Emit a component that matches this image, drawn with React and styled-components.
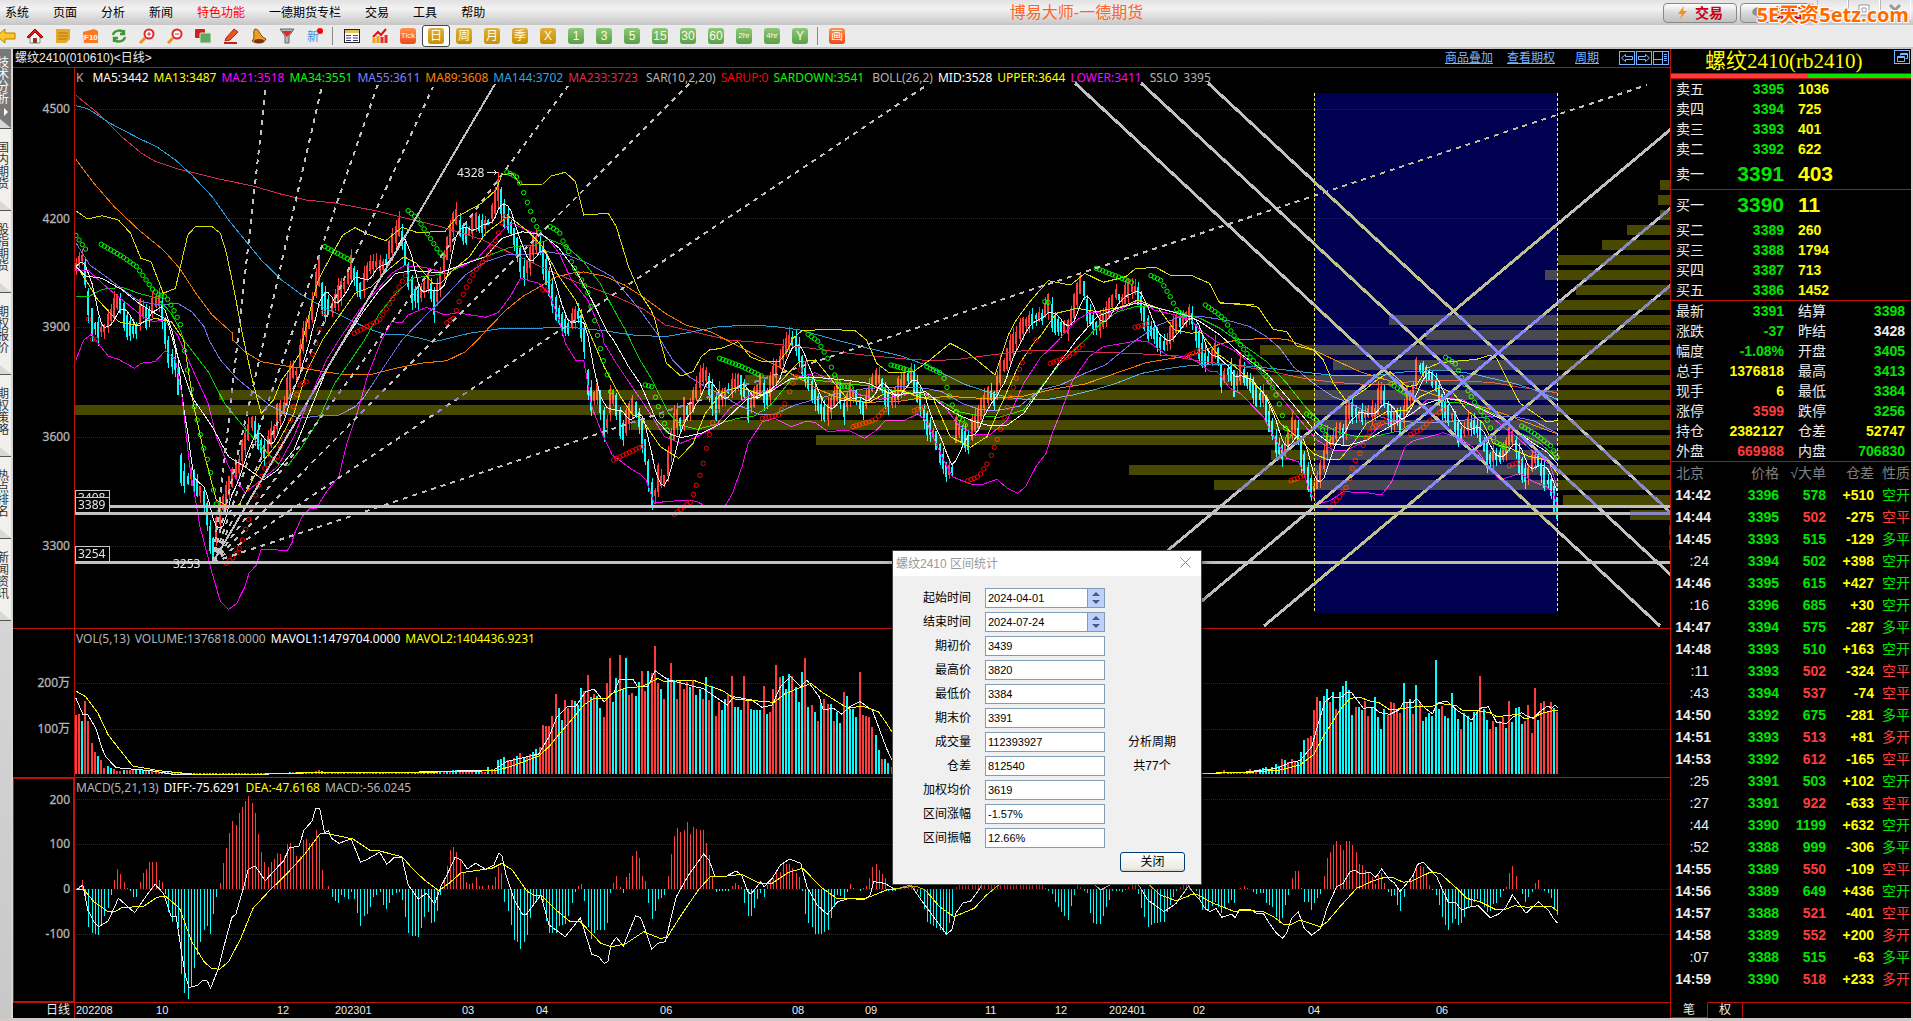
import React from 'react';
import styled, { createGlobalStyle, css } from 'styled-components';

const C = {
  line: '#c01008',
  grid: '#8c0000',
  up: '#ff3c3c',
  down: '#00ffff',
  green: '#00e600',
  yellow: '#ffff00',
  red: '#ff3c3c',
  white: '#ececec',
  grey: '#b4b4b4',
  link: '#78b4ff',
};
const UI = '"Liberation Sans", "Noto Sans CJK SC", sans-serif';
const LEGEND = '"Noto Sans", "Noto Sans CJK SC", sans-serif';

const Global = createGlobalStyle`
  * { box-sizing: border-box; }
  body { margin: 0; background: #000; font-family: ${UI}; font-size: 12px; }
  button, input { font: inherit; }
  button { padding: 0; border: 0; background: none; color: inherit; white-space: nowrap; }
  table { border-collapse: collapse; }
`;

/* ---------- chart data ---------- */

// Each sheet has its own origin and scale; every series is a run of points over several sheets.
const sheet = (ox, oy, sx, sy) => (text) =>
  text.split(' ').map((p) => {
    const [x, y] = p.split(',').map(Number);
    return [ox + x / sx, oy + y / sy];
  });
const P1 = sheet(0, 0, 2.45, 3);
const P2 = sheet(400, 0, 2.45, 3);
const P3 = sheet(1040, 0, 2.45, 3);
const P4 = sheet(0, 340, 2.45, 3);
const P5 = sheet(640, 340, 2.45, 3);
const P6 = sheet(1200, 300, 3, 3);
const V1 = sheet(0, 620, 2.45, 3);
const V2 = sheet(560, 620, 2.45, 3);
const V3 = sheet(1190, 620, 3, 3);
const run = (...parts) => parts.flat();

const ma233 = run(
  P1('186,286 240,340 300,412 345,458 380,484 430,505 470,517 540,538 620,558 690,583 750,600 820,609 920,632 1020,662 1080,680 1180,718'),
  P2('230,736 300,775 380,820 430,845 530,890 600,930 650,975 720,995'),
  P5('215,0 300,8 400,22 500,38 570,48 660,58 720,62 780,58 860,45 940,32 1030,32 1130,37 1200,40 1290,46 1380,65 1450,75 1540,92'),
  P6('240,220 310,235 400,247 480,252 560,255 640,244 720,241 800,243 880,248 960,262 1072,278'),
);
const ma144 = run(
  P1('186,317 215,326 270,370 340,415 385,441 430,480 470,525 520,590 560,660 600,720 640,780 690,840 740,885 790,920 850,955 900,985 940,1002 985,1003 1040,1018'),
  P4('1060,6'),
  P2('110,1018 170,1000 240,987 320,985 420,982 500,992 570,1005 650,1010 710,997 780,980 860,975 920,980 980,990'),
  P5('480,0 560,25 640,48 700,75 740,100 800,135 850,155 900,172 950,179 1000,178 1060,165 1110,150 1160,133 1230,100 1280,88 1340,78 1400,72 1460,75'),
  P6('240,208 300,215 400,226 480,228 560,222 620,215 700,212 760,213 820,222 880,236 940,250 1000,268 1072,298'),
);
const ma89 = run(
  P1('186,478 230,550 280,620 340,690 400,750 440,805 480,880 520,945 570,1000'),
  P4('570,0 600,35 640,65 700,78 780,92 830,102 910,103 970,85 1030,70 1095,62 1140,35 1170,0'),
  P2('220,980 260,930 300,890 340,862 380,832 430,817 450,816 500,828 550,855 600,895 650,940 700,975 760,995'),
  P5('220,5 290,50 340,80 390,115 440,150 490,175 560,187 640,183 700,172 770,170 850,176 940,168 1010,148 1090,132 1160,102 1240,68 1290,58 1340,48'),
  P6('0,157 60,132 110,120 200,115 260,118 330,145 400,178 480,215 560,240 640,262 720,290 780,303 860,325 920,345 1000,375 1072,402'),
);
const ma55 = run(
  P1('186,728 220,795 260,830 300,868 340,903 390,915 435,910 470,935 500,980'),
  P4('512,0 540,60 580,115 620,155 660,195 700,220 735,235 780,228 830,225 870,200 890,175 930,100 960,45 985,0'),
  P1('1040,950 1090,890 1140,825 1190,785 1240,765 1300,762 1340,755 1390,765 1440,790 1500,830 1568,930'),
  P2('635,1010'),
  P5('50,0 80,60 120,110 160,140 200,165 240,195 290,222 330,222 380,195 430,178 500,155 560,145 640,140 700,145 740,155 790,190 830,208 870,213 930,198 980,150 1030,135 1090,100 1140,75 1180,35 1215,0'),
  P3('290,975 340,952 390,948 450,960'),
  P6('80,60 150,80 200,110 240,145 280,200 340,250 400,290 450,310 520,345 600,365 700,368 780,362 860,350 940,350 1000,362 1072,400'),
);
const ma34 = run(
  P1('186,890 220,888 250,868 300,862 340,880 385,895 420,940 445,1000'),
  P4('450,0 510,95 550,190 600,265 640,320 680,370 705,378 740,320 780,240 820,130 860,60 893,0'),
  P1('930,940 970,880 1010,835 1050,828 1100,818 1150,785 1200,765 1250,742 1310,735 1345,718 1390,740 1430,785 1470,850 1500,920 1530,985'),
  P5('0,60 30,120 70,220 100,255 140,268 180,255 240,235 280,228 320,195 370,120 400,115 460,125 500,130 560,138 640,155 700,165 740,185 780,215 820,225 880,232 940,210 980,145 1030,70 1090,0'),
  P3('150,970 190,935 240,918 290,925 350,942'),
  P6('0,55 60,85 130,135 200,185 260,250 320,325 370,375 420,398 470,410 530,408 600,392 660,355 720,305 770,308 830,318 900,350 960,400 1020,430 1072,475'),
);
const ma21 = run(
  P1('186,810 215,810 260,860 310,910 350,950 375,965 400,960 435,1005'),
  P4('440,0 480,110 510,190 530,290 560,380 600,458 640,420 680,380 720,290 760,170 800,60 830,0'),
  P1('880,930 920,875 960,820 990,797 1040,802 1080,815 1130,800 1170,775 1210,720 1240,680 1255,670 1290,690 1340,712 1370,760 1400,840 1440,900 1475,1000'),
  P4('1480,10 1510,70 1568,175'),
  P5('30,230 60,290 100,310 140,290 180,265 220,205 270,165 320,150 370,118 430,98 490,135 540,165 590,178 640,165 690,155 740,190 780,255 820,285 860,282 900,240 940,130 980,55 1025,0'),
  P3('90,960 120,938 170,940 210,920 240,903 280,930 330,945 370,960'),
  P6('0,90 50,125 100,150 150,190 200,240 250,300 300,360 350,420 400,450 440,450 500,420 540,375 600,360 640,340 680,300 740,295 790,300 850,330 910,380 960,420 1000,455 1050,495 1072,560'),
);
const ma13 = run(
  P1('186,795 215,850 240,900 290,965 330,975 380,955 420,965 445,1010'),
  P4('450,0 475,200 500,340 530,480 560,500 585,495 610,440 640,370 680,310 720,220 750,100 790,0'),
  P1('830,950 870,880 910,860 950,810 990,770 1020,790 1060,850 1080,850 1110,810 1150,770 1190,700 1245,648 1290,690 1330,740 1370,830 1410,900 1445,1000'),
  P4('1452,0 1480,80 1520,170 1550,225'),
  P5('0,230 50,320 95,355 130,310 160,220 200,160 240,140 300,165 340,130 390,65 430,60 470,120 510,180 560,188 600,160 640,150 680,170 720,180 760,290 810,322 850,290 890,180 930,70 970,0'),
  P3('0,1010 40,940 90,925 140,935 200,920 240,900 290,925 330,990 370,1000'),
  P6('0,95 50,160 100,195 150,240 200,290 240,370 290,410 340,460 380,478 420,478 460,430 500,370 560,335 620,330 660,290 720,262 760,280 800,330 850,370 880,430 930,445 990,470 1040,480 1072,520'),
);
const bollMid = run(
  P1('186,800 210,828 250,835 300,870 340,910 380,940 410,960'),
  P4('430,30 470,170 520,260 560,350 600,380 645,420 680,390 720,330 760,210 800,90 845,0'),
  P1('890,935 930,870 970,820 1010,812 1080,818 1130,795 1190,770 1230,715 1280,695 1330,705 1370,745 1410,810 1450,900 1490,1000'),
  P4('1503,0 1540,80'),
  P5('0,130 40,240 70,280 100,293 150,280 200,250 260,180 320,155 370,115 430,112 500,120 560,130 620,165 700,155 740,195 780,225 820,245 860,258 900,255 940,220 980,150 1020,80 1070,0'),
  P3('140,950 190,925 240,908 300,928 370,950'),
  P6('0,65 60,105 120,160 200,220 260,290 310,350 350,400 390,430 440,438 500,420 560,385 620,350 680,310 730,295 780,300 850,330 910,360 960,400 1000,430 1040,455 1072,490'),
);
const bollUpper = run(
  P1('186,633 215,657 250,647 290,660 320,700 345,775 370,785 400,880 430,865 440,810 460,705 480,678 520,680 540,700 555,760 575,880 595,1010'),
  P4('597,0 620,130 640,220 670,180 690,120 715,80 735,40 742,0'),
  P1('760,930 780,840 810,770 840,705 870,683 900,702 945,722 985,682 1020,697 1090,695 1120,650 1180,610 1215,570 1230,525 1255,520 1275,553 1330,552 1350,528 1385,517 1410,545 1430,645 1490,640 1510,680 1540,800 1568,880'),
  P2('615,930 625,960'),
  P5('49,0 65,70 100,108 130,95 150,50 170,30 200,25 240,5 270,50 300,65 340,65 360,35'),
  P2('963,1015 985,992 1050,988 1115,992'),
  P5('555,0 580,70 610,98 670,95 710,60 760,10 800,35 840,75 870,105 890,30'),
  P2('1490,1005 1510,960 1540,910 1568,870'),
  P3('20,842 75,855 110,820 155,847 210,830 235,805 285,803 320,826 370,826 415,850 440,908 525,915'),
  P6('60,10 120,12 175,22 200,60 220,88 260,95 290,138 340,150 370,180 400,250 440,305 500,265 530,240 570,215 620,260 650,255 680,205 720,188 830,178 870,165 890,175 920,235 960,310 1010,345 1040,365 1072,362'),
);
const bollLower = run(
  P4('186,60 205,0'),
  P1('225,1002'),
  P4('240,10 265,48 290,58 330,85 345,70 380,65 405,32 430,60 445,160 465,380 490,560 520,700 540,785 560,808 580,790 600,740 610,700 628,675 640,628 670,628 690,632 705,630 715,610 720,585 740,530 760,505 775,505 800,455 830,410 850,310 875,220 900,110 935,0'),
  P1('960,965 985,968 1000,945 1045,922 1070,935 1090,945 1120,938 1190,952 1220,938 1250,890 1275,835 1320,850 1345,880 1370,960'),
  P4('1385,10 1410,60 1430,60 1450,200 1475,280 1500,345 1550,390'),
  P5('0,402 15,420 35,490 60,485 120,480 140,485 155,495 210,495 225,465 250,380 265,310 300,245 330,235 370,260 410,243 430,248 460,275 510,270 550,295 580,270 600,243 650,240 680,222 700,240 740,350 765,410 810,432 840,433 875,418 900,445 925,460 945,440 970,380 995,340 1010,280 1030,220 1060,120 1100,50 1135,20 1220,2 1245,5 1290,45 1340,50'),
  P6('0,190 30,215 50,213 90,265 120,280 150,310 190,350 215,400 240,440 260,475 295,485 310,515 330,575 350,612 390,602 430,575 500,578 545,585 575,545 600,480 615,440 640,422 680,412 730,398 780,415 830,450 870,505 900,540 930,530 960,520 1000,545 1040,560 1060,580 1072,620'),
);
const priceTrack = run(
  P1('186,800 195,780 205,770 212,880 222,960 240,990 255,985 270,950 288,900 300,930 310,975 322,990 335,990 345,920 360,960 375,910 390,900 400,950'),
  P4('410,30 420,60 432,75 440,170 443,385 455,430 470,405 480,440 495,460 505,500 515,600 520,640 530,560 540,510 555,460 565,420 575,400 585,380 595,320 605,290 615,240 625,270 635,310 650,340 660,300 672,275 680,220 695,210 705,140 715,90 725,100 735,50 742,0'),
  P1('750,985 760,960 770,890 780,800 790,900 800,920 815,920 825,890 840,860 850,845 860,800 870,830 885,880 895,830 905,800 920,790 935,800 945,790 955,740 965,720 978,680 990,740 1000,830 1012,880 1025,890 1040,860 1050,840 1063,910 1075,860 1085,800 1100,720 1115,640 1125,680 1140,710 1155,680 1165,660 1180,680 1195,670 1210,620 1222,560 1232,640 1242,660 1255,690 1270,760 1282,820 1295,790 1305,740 1320,720 1330,780 1345,850 1360,920 1375,960 1390,990 1405,950 1415,940 1430,1010'),
  P4('1435,60 1445,180 1455,170 1465,150 1475,230 1485,270 1495,180 1505,170 1515,230 1525,280 1535,240 1550,190 1560,210'),
  P5('0,250 15,350 25,460 35,470 45,410 55,430 65,400 78,290 88,230 100,250 110,200 120,220 135,160 150,110 160,100 170,140 185,210 195,170 210,160 225,140 240,120 255,150 265,210 280,170 295,130 310,180 325,110 345,60 355,20 370,0 385,15 400,90 412,130 425,160 440,200 455,230 470,190 485,150 500,210 515,150 530,170 545,210 560,160 575,110 590,120 600,170 615,190 630,150 650,120 665,100 680,160 690,200 705,260 720,280 735,340 750,390 765,390 775,260 790,290 805,310 815,260 830,230 840,190 855,160 870,180 880,100 895,70 910,20'),
  P2('1515,1000 1530,970 1545,960 1560,950'),
  P3('5,950 20,910 35,970 50,980 70,980 85,910 95,860 105,840 115,930 125,960 140,980 155,960 170,920 185,880 200,900 215,870 230,860 245,900 260,980 280,1000'),
  P5('1280,20 1290,10'),
  P3('320,1000 335,970 350,960 365,940 375,960'),
  P6('0,150 15,180 30,180 50,140 65,240 75,220 90,210 105,260 120,210 140,240 155,260 170,290 190,290 205,360 215,380 225,430 240,450 250,460 260,430 275,380 290,380 300,450 315,500 330,560 345,570 355,530 370,490 380,430 400,420 415,380 430,400 445,320 470,340 490,350 510,330 525,340 540,280 555,300 570,360 590,350 605,380 620,300 640,280 650,200 670,210 690,230 710,260 725,310 740,340 760,350 775,400 790,400 805,370 820,380 835,390 850,430 865,480 880,470 900,470 915,450 930,400 945,420 955,480 970,520 980,530 995,490 1010,470 1020,500 1035,540 1050,550 1060,590 1070,625'),
);
const sarDown = [
  P1('186,706 195,722 210,748'),
  P1('248,733 300,770 335,800 375,870 390,885'),
  P1('395,887 407,890 430,940 447,988'),
  P1('796,740 862,783'),
  P1('1000,632 1022,655 1057,720 1075,755 1088,770'),
  P1('1242,516 1265,530 1275,553'),
  P1('1348,680 1370,695 1385,740'),
  P5('13,135 28,140'),
  P5('195,55 250,80 298,108'),
  run(P2('1000,1003'), P5('437,5 452,38')),
  P5('493,140 515,142'),
  P5('615,75 645,85 660,92'),
  P5('703,80 738,100'),
  P3('12,905 22,908'),
  P3('138,805 225,847'),
  P3('272,827 295,840 320,892 335,930 350,945'),
  run(P3('405,915 440,945'), P6('75,60 95,97 140,160 190,215 217,262')),
  P6('320,342 345,355 385,415'),
  P6('573,252 625,285'),
  P6('737,172 765,190 800,265 825,310 865,365 885,425 920,445'),
  P6('965,378 1010,405 1055,440 1072,475'),
];
const sarUp = [
  P1('217,958'),
  P1('227,1018 237,1018'),
  P4('555,670 570,655 587,625'),
  P4('633,436 648,385 678,350'),
  P4('735,135 750,125'),
  P1('868,1000 930,960 965,890 993,827'),
  P1('1095,968 1110,955'),
  P1('1143,862 1165,810 1195,770 1220,705 1228,672 1235,650'),
  P1('1330,870 1338,870'),
  P4('1503,360 1568,322'),
  P5('84,523 123,487'),
  P5('300,235 340,225 360,180'),
  P5('522,260 575,240 603,205'),
  P5('672,212 698,200'),
  P5('803,422 830,410 850,372'),
  P5('1005,70 1050,50 1088,10'),
  P3('233,982 265,970'),
  P5('1340,48 1375,30'),
  P6('273,542 310,528'),
  P6('390,623 418,592 440,560'),
  P6('480,460 500,410 520,380 545,373 562,340'),
  P6('632,403 665,388 697,355 730,328'),
  P6('928,497 960,485'),
];
const sarDownDots = run(
  P1('1283,578 1292,607 1300,634 1307,660 1315,680 1321,697 1393,755 1400,785 1408,805 1415,820 1425,840 1432,857 1440,878 1448,920 1457,962 1464,1006'),
  P4('452,32 459,90 469,148 476,200 483,240 491,284 499,325 508,358 516,398 523,450 530,492 537,515 1471,26 1478,62 1488,104 1496,155'),
  P5('38,172 45,200 53,227 60,250 67,270 78,292 460,55 469,82 477,105 485,125 745,115 752,142 758,168 765,195 775,215 783,235 790,240 797,255'),
  P6('228,285 238,312 247,347 257,385 266,408'),
);
const sarUpDots = run(
  P4('594,600 602,568 609,538 616,502 626,466 633,436 687,320 695,298 705,275 712,240 719,200 727,163 758,80 766,43 774,10'),
  P1('782,988 792,938 1118,932 1125,905 1135,883'),
  P5('5,320 131,463 138,436 147,406 155,370 163,325 170,283 178,248 185,215 367,155 375,130 383,110 392,90 405,70 861,346 868,322 875,298 883,268 892,232 900,202 907,172 915,142 922,115 930,88 937,68 955,35 970,0'),
  P6('449,535 457,505 466,482'),
);
const profile = [
  [180, 1660], [195, 1658], [210, 1660], [225, 1627], [240, 1602], [255, 1558], [270, 1545], [285, 1576],
  [300, 1558], [315, 1389], [330, 1426], [345, 1260], [360, 1333], [375, 745], [390, 219], [405, 75],
  [420, 631], [435, 816], [450, 1271], [465, 1129], [480, 1214], [495, 1563], [510, 1630], [525, 1669], [540, 1669],
];
const volumes = run(
  V1('183,285 193,282 200,303 208,243 215,303 222,368 230,395 240,408 247,420 255,445 265,438 285,452 340,450 380,455 440,458 560,460 700,460 710,455 770,456 780,450 800,457 1000,456 1050,455 1130,450 1185,455 1195,442 1210,450 1220,420 1235,412 1250,422 1275,400 1285,415 1300,402 1320,380 1328,315 1345,318 1352,288 1360,222 1368,265 1376,300 1384,240 1392,265 1400,240 1407,243 1416,256 1423,205 1430,213 1438,165 1446,230 1455,223 1463,228 1470,265 1478,290 1485,190 1495,115 1502,245 1516,105 1524,208 1533,115 1541,225 1549,218 1556,228 1564,186'),
  V2('200,153 208,212 216,153 222,158 230,78 240,190 247,208 255,237 262,175 270,130 278,180 286,237 294,180 301,208 310,185 320,200 325,180 333,225 341,208 348,237 357,170 365,240 372,198 380,288 388,245 397,270 404,238 412,222 419,168 427,262 436,262 443,270 450,168 460,240 468,268 488,270 498,198 505,282 515,275 522,207 530,135 537,172 544,168 553,207 561,162 568,168 577,200 584,245 592,156 600,115 607,262 615,255 623,275 632,302 640,250 647,237 660,252 670,302 678,275 686,308 693,215 701,228 710,268 717,268 725,290 733,156 740,285 756,290 764,322 772,345 780,390 788,418 795,418 803,428 811,440 830,455'),
  V3('0,460 90,458 102,450 115,458 170,458 180,447 190,455 228,441 238,447 255,432 265,438 276,417 295,425 303,417 322,425 333,395 342,360 351,354 360,348 372,270 381,231 390,243 399,228 408,207 420,246 429,216 438,267 447,216 456,198 468,183 477,210 486,285 495,261 504,261 516,270 525,243 534,288 543,265 552,231 564,291 573,327 582,267 591,285 600,246 612,249 621,270 630,279 639,189 648,250 660,237 669,282 678,195 687,252 696,303 708,291 717,279 726,288 735,120 744,267 756,258 765,288 774,294 783,219 792,267 804,297 813,327 822,280 831,288 840,306 852,276 861,276 870,168 879,267 888,300 900,327 909,303 918,321 927,303 936,291 948,324 957,243 966,306 975,264 984,261 996,312 1005,303 1014,255 1023,339 1032,204 1044,300 1053,249 1062,243 1071,275 1080,246 1092,264 1101,275'),
);
const mavol1 = run(
  V1('186,235 203,283 215,285 235,325 250,385 260,412 285,443 370,452 420,462 660,462 800,457 1000,457 1210,450 1240,425 1320,402 1345,350 1365,290 1390,260 1410,260 1435,215 1455,207 1480,245 1505,215 1518,177 1550,177'),
  V2('190,200 215,200 233,152 265,180 300,190 330,200 350,205 380,230 410,255 425,230 470,240 495,262 520,255 540,200 565,170 590,200 605,180 635,230 645,270 670,265 690,282 710,260 735,245 765,270 800,385 815,425'),
  V3('-60,460 35,460 150,458 260,445 300,428 330,422 365,380 385,310 405,245 425,230 440,233 458,230 470,217 485,218 520,265 550,262 570,278 600,283 630,268 640,248 668,248 680,235 700,260 728,282 740,250 770,243 800,270 845,300 870,265 895,260 920,308 950,310 970,290 995,278 1010,288 1030,295 1050,275 1073,258 1085,265 1095,255 1103,263'),
);
const mavol2 = run(
  V1('186,213 210,230 240,280 265,345 325,438 390,452 470,462 650,462 780,457 1000,458 1215,452 1250,440 1320,408 1345,380 1365,350 1400,300 1430,255 1455,235 1485,237 1500,220 1535,203'),
  V2('200,200 240,175 255,185 325,180 400,213 430,238 525,247 550,222 615,190 640,215 705,265 740,258 780,275 800,310 815,340'),
  V3('-60,460 35,460 180,457 270,450 330,435 370,405 400,350 450,270 480,235 510,232 540,243 565,247 600,270 680,260 730,258 750,250 800,258 815,270 850,270 900,278 920,290 985,283 1005,297 1035,290 1060,278 1103,270'),
);
const macdBars = run(
  V1('190,808 203,780 210,840 217,920 226,938 240,945 248,915 256,888 265,865 273,825 281,780 289,747 297,763 305,785 313,803 320,812 328,832 336,832 344,785 352,760 360,748 367,727 382,727 390,780 398,787 405,822 413,875 421,905 430,890 437,925 445,1063 453,1120 460,1137 470,1100 477,1045 485,1005 492,965 500,930 508,918 516,942 524,882 532,832 539,790 547,730 555,685 563,638 570,603 577,615 587,580 594,560 602,543 610,528 617,550 626,580 634,642 641,697 648,727 656,740 664,725 673,717 681,700 696,707 704,672 712,668 720,680 728,708 735,708 743,660 751,657 758,668 766,665 774,630 782,650 790,750 798,808 805,797 812,832 829,850 837,825 852,837 860,817 868,838 876,878 883,917 890,888 900,882 908,862 916,832 930,817 940,855 948,866 962,825 978,815 986,840 993,890 1001,940 1010,947 1025,950 1033,925 1041,890 1048,875 1057,908 1065,905 1072,873 1080,825 1088,775 1096,738 1103,690 1111,682 1118,697 1126,720 1135,760 1142,785 1150,792 1158,788 1165,770 1174,797 1182,797 1190,808 1198,795 1206,795 1214,770 1221,742 1229,760 1236,845 1245,873 1252,915 1260,960 1267,965 1275,987 1284,967 1292,945 1300,895 1308,855 1315,840 1323,825 1330,845 1338,902 1346,938 1360,938 1370,918 1384,912 1392,888 1400,850 1408,815 1416,797 1424,792 1432,842 1440,920 1449,957 1456,940 1464,930 1480,930 1488,908 1496,820 1503,788 1511,768 1518,800 1527,820 1535,772 1542,760 1549,707'),
  V2('184,693 195,713 202,768 210,783 217,850 224,897 233,872 242,838 250,835 257,825 264,768 273,702 280,648 288,623 296,635 304,630 312,606 319,642 327,620 334,627 350,630 360,668 366,705 374,768 382,815 412,812 420,797 430,788 444,800 452,850 460,888 469,888 477,863 485,838 490,820 498,832 507,795 515,783 522,773 530,750 538,757 546,730 561,732 570,743 585,770 592,812 601,882 610,908 618,920 626,942 640,942 648,935 656,930 664,893 672,860 680,825 695,833 703,815 711,792 720,803 735,812 750,797 757,773 765,740 773,732 782,750 790,762 798,773 806,812 820,812 845,797 870,800 882,830 892,868 900,905 915,918 930,930 947,938 955,910 963,885 970,800 980,780 1060,770 1180,790 1195,812 1205,822 1220,860 1244,900 1260,825 1270,795 1290,820 1305,910 1325,912 1340,860 1355,812 1380,815 1410,780 1425,865 1440,922 1460,908 1480,905 1495,855 1510,812 1530,790'),
  V3('15,812 25,840 40,870 60,870 75,845 95,878 110,855 125,840 135,850 145,808 160,797 175,803 200,822 220,818 230,850 245,860 258,890 270,910 280,895 288,855 295,825 305,773 316,753 326,753 335,805 343,845 352,845 365,870 375,848 390,822 400,768 412,715 421,697 430,675 439,663 448,675 460,690 469,663 478,663 487,675 497,697 508,732 517,735 526,750 535,757 545,770 557,792 566,765 575,758 585,790 595,815 605,828 614,825 622,855 631,872 640,830 650,808 660,780 670,760 680,735 690,738 700,742 710,765 720,795 736,825 748,855 757,890 766,915 775,930 785,910 796,897 806,915 815,908 824,890 833,862 845,858 855,845 865,838 880,862 893,877 903,873 910,852 920,850 930,832 940,812 950,800 958,760 967,738 977,768 988,808 998,822 1006,845 1015,832 1025,815 1037,790 1046,780 1055,808 1072,820 1085,835 1093,870 1103,885'),
);
const diff = run(
  V1('186,810 203,795 215,870 230,905 242,920 265,903 290,835 330,878 360,825 380,793 400,820 420,890 432,890 445,1000 455,1070 463,1103 485,1095 497,1080 508,1083 516,1105 535,1045 555,950 568,893 578,882 595,810 608,748 625,738 650,782 675,748 695,722 710,682 732,680 745,630 765,603 773,567 783,565 795,638 805,633 812,655 830,670 860,657 875,700 883,727 900,718 930,697 948,733 965,713 985,713 1000,795 1025,837 1045,820 1065,852 1080,800 1095,765 1115,712 1130,720 1145,747 1165,730 1190,748 1210,735 1222,700 1230,707 1240,767 1260,840 1280,883 1290,883 1325,825 1345,915'),
  V2('13,950 50,893 78,1003 95,1010 108,1030 117,1025 125,975 138,952 155,978 185,888 197,892 210,932 225,988 240,970 258,965 285,830 315,765 352,702 365,720 380,770 405,770 432,753 445,765 460,815 468,822 492,785 500,800 520,775 540,735 562,717 590,730 605,800 630,855 655,883 680,845 710,835 745,840 760,825 768,785 795,790 820,808 860,795 885,840 915,890 947,942 960,930 970,880 988,847 1005,845 1025,812 1045,770 1250,760 1310,795 1325,810 1400,760 1440,840 1480,875 1510,850 1540,798'),
  V3('15,825 30,840 45,865 60,875 78,865 95,892 125,882 135,893 150,867 180,868 200,880 220,880 235,905 258,938 277,955 290,940 305,895 325,875 343,925 365,945 392,925 412,862 440,800 460,790 480,755 495,750 510,762 540,757 557,772 575,747 600,780 613,788 630,815 655,785 670,765 683,733 700,727 740,770 760,815 775,847 797,848 815,870 835,862 865,857 900,893 925,883 948,862 967,825 1008,880 1045,845 1060,858 1075,870 1090,895 1103,910'),
);
const dea = run(
  V1('186,810 205,808 230,845 262,873 285,873 300,862 350,860 385,832 405,828 440,865 470,965 500,1025 518,1045 538,1048 560,1025 590,955 620,865 660,812 700,765 745,705 785,640 800,640 865,657 905,690 930,693 985,710 1010,745 1040,780 1075,812 1100,790 1130,758 1205,745 1230,730 1255,750 1290,812 1310,827 1325,825 1360,868'),
  V2('0,880 25,905 50,905 100,970 125,980 160,972 205,935 245,955 262,953 300,880 340,808 370,768 410,768 445,763 490,790 520,790 560,757 595,745 640,802 680,837 750,835 800,810 870,798 895,810 930,860 965,890 1015,865 1045,825 1075,795 1400,780 1440,790 1470,825 1510,842 1540,828'),
  V3('0,825 20,823 70,850 135,875 160,870 220,875 250,890 280,912 300,915 330,900 390,920 410,907 450,860 500,805 550,782 585,772 610,773 640,787 665,783 720,757 750,760 800,805 830,835 870,845 915,868 945,868 975,857 1010,862 1050,858 1085,860 1103,873'),
);

const BARS = 464;
const STEP = 3.2;
const barX = (i) => Math.round(75.5 + i * STEP);

function random(seed) {
  let s = seed;
  return () => {
    s = (s * 1664525 + 1013904223) % 4294967296;
    return s / 4294967296;
  };
}
function valueAt(points, x, snap) {
  let k = 0;
  while (k < points.length - 2 && points[k + 1][0] < x) k += 1;
  const [a, b] = [points[k], points[k + 1]];
  if (snap && Math.abs(a[0] - x) < snap && Math.abs(a[0] - x) <= Math.abs(b[0] - x)) return a[1];
  if (snap && Math.abs(b[0] - x) < snap) return b[1];
  const t = Math.min(1, Math.max(0, (x - a[0]) / (b[0] - a[0] || 1)));
  return a[1] + (b[1] - a[1]) * t;
}
function alongPath(points) {
  if (points.length < 2) return points;
  const dots = [];
  const end = points[points.length - 1][0];
  for (let x = points[0][0]; x <= end + 1; x += STEP) dots.push([x, valueAt(points, x)]);
  return dots;
}
const toPoints = (list) => list.map((p) => `${p[0].toFixed(1)},${p[1].toFixed(1)}`).join(' ');

function buildCandles() {
  const rnd = random(77);
  const out = { upWick: '', upBody: '', downWick: '', downBody: '', ma: [] };
  const closes = [];
  for (let i = 0; i < BARS; i += 1) {
    const x = barX(i);
    const mid = valueAt(priceTrack, x);
    const prev = valueAt(priceTrack, x - STEP);
    const move = mid - prev + (rnd() - 0.5) * 8;
    const half = 2 + Math.min(9, Math.abs(move) * 0.6) + rnd() * 3;
    const top = mid - half;
    const bottom = mid + half;
    const wickTop = Math.max(172, top - rnd() * 8);
    const wickBottom = bottom + rnd() * 8;
    const kind = move < 0 ? 'up' : 'down';
    out[`${kind}Body`] += `M${x} ${top.toFixed(1)}V${bottom.toFixed(1)}`;
    out[`${kind}Wick`] += `M${x + 0.5} ${wickTop.toFixed(1)}V${wickBottom.toFixed(1)}`;
    closes.push(mid);
    const tail = closes.slice(-5);
    out.ma.push([x, tail.reduce((s, v) => s + v, 0) / tail.length]);
  }
  return out;
}
function buildVolumes() {
  const rnd = random(9);
  const out = { up: '', down: '' };
  for (let i = 0; i < BARS; i += 1) {
    const x = barX(i);
    out[rnd() < 0.48 ? 'up' : 'down'] += `M${x} 774V${Math.min(773, valueAt(volumes, x, 1.7)).toFixed(1)}`;
  }
  return out;
}
function buildMacd() {
  const out = { up: '', down: '' };
  for (let i = 0; i < BARS; i += 1) {
    const x = barX(i) + 0.5;
    const y = valueAt(macdBars, x, 1.7);
    out[y < 889.3 ? 'up' : 'down'] += `M${x} 889V${y.toFixed(1)}`;
  }
  return out;
}
const candles = buildCandles();
const volumeBars = buildVolumes();
const macdHist = buildMacd();

/* ---------- window frame ---------- */

const Desk = styled.div`
  display: flex;
  flex-direction: column;
  height: 100vh;
  min-height: 1000px;
  min-width: 1400px;
  overflow: hidden;
  background: #ebebeb;
`;
const MenuBar = styled.header`
  position: relative;
  display: grid;
  grid-template-columns: 1fr auto 1fr;
  align-items: center;
  flex: none;
  height: 25px;
  background: linear-gradient(#e2e2e2, #f2f2f2 35%, #c6c6c6);
`;
const MenuList = styled.nav`
  display: flex;
  gap: 24px;
  padding-left: 5px;
`;
const MenuItem = styled.button`
  color: ${(p) => (p.$hot ? '#f00' : '#000')};
  line-height: 18px;
`;
const AppTitle = styled.div`
  padding-left: 240px;
  font-size: 16px;
  line-height: 20px;
  color: #ff6428;
  white-space: nowrap;
`;
const WindowTools = styled.div`
  display: flex;
  justify-content: flex-end;
  gap: 3px;
  padding-right: 2px;
`;
const PillButton = styled.button`
  display: flex;
  align-items: center;
  justify-content: center;
  gap: 8px;
  width: 74px;
  height: 20px;
  border: 1px solid #888;
  border-radius: 4px;
  background: linear-gradient(#fff, #d8d8d8 50%, #c0c0c0);
  color: #c80014;
  font-size: 14px;
  font-weight: 700;
  line-height: 18px;
`;
const FrameButtons = styled.div`
  display: flex;
  width: 94px;
  margin-top: -3px;
`;
const FrameButton = styled.button`
  display: flex;
  flex: 1;
  align-items: center;
  justify-content: center;
  height: 20px;
  border-right: 1px solid #fff;
  border-left: 1px solid #b8b8b8;
`;
const Brand = styled.div`
  position: absolute;
  top: 0;
  right: 4px;
  font-family: "Open Sans", "Noto Sans CJK SC", sans-serif;
  font-size: 20px;
  font-weight: 700;
  line-height: 30px;
  color: #ff6a00;
  text-shadow: 1px 1px #fff, -1px -1px #fff, 1px -1px #fff, -1px 1px #fff;
  white-space: nowrap;
`;

const ToolBar = styled.div`
  display: flex;
  flex: none;
  height: 24px;
  border-bottom: 2px solid #c8c4c4;
  background: #ebebeb;
`;
const ToolButton = styled.button`
  display: flex;
  align-items: center;
  justify-content: center;
  width: 28px;
  height: 22px;
  ${(p) => p.$first && css`width: 21px; justify-content: flex-start;`}
  ${(p) => p.$active && css`border: 1px solid #444; border-radius: 3px; background: #fff;`}
`;
const Badge = styled.span`
  width: 16px;
  height: 16px;
  border-radius: 3px;
  background: ${(p) => p.$fill};
  color: #fffbe0;
  font-size: ${(p) => (p.$small ? 8 : 12)}px;
  line-height: 16px;
  text-align: center;
`;
const ToolDivider = styled.span`
  width: 9px;
  height: 18px;
  margin: 2px 0;
  background: linear-gradient(#888, #888) 3px 0 / 1px 100% no-repeat;
`;

const Workspace = styled.main`
  display: grid;
  grid-template-columns: 13px minmax(0, 1fr) 241px;
  grid-template-rows: minmax(0, 1fr);
  flex: 1;
  min-height: 0;
  border-right: 2px solid #d4d0cc;
  border-bottom: 3px solid #cfcac8;
`;

const SideTabs = styled.nav`
  display: flex;
  flex-direction: column;
  overflow: hidden;
  border-right: 2px solid #d8d4d4;
  background: linear-gradient(#e8e8e8, #c8c8c8);
`;
const SideTab = styled.button`
  position: relative;
  flex: none;
  width: 11px;
  height: ${(p) => (p.$active ? 80 : 82)}px;
  padding-top: ${(p) => (p.$active ? 8 : 13)}px;
  border-bottom: 1px solid #555;
  background: ${(p) => (p.$active ? '#787878' : '#f2f0ec')};
  color: ${(p) => (p.$active ? '#fff' : '#333')};
  display: flex;
  flex-direction: column;
  align-items: flex-end;
  overflow: hidden;
  line-height: 12px;
  &::after {
    content: '';
    position: absolute;
    left: 0;
    bottom: 0;
    border-left: 11px solid #d8d8d8;
    border-top: 9px solid transparent;
  }
`;
const SideChar = styled.span`
  display: block;
  width: 12px;
  margin-right: 2px;
`;

/* ---------- chart ---------- */

const ChartPane = styled.section`
  position: relative;
  display: grid;
  grid-template-columns: 62px minmax(0, 1fr);
  grid-template-rows: 19px minmax(0, 561fr) minmax(0, 149fr) minmax(0, 225fr) 15px;
  background: #000;
`;
const ChartHead = styled.div`
  grid-column: 1 / -1;
  display: flex;
  align-items: center;
  padding: 0 1px 0 2px;
  border-bottom: 1px solid ${C.line};
  color: ${C.white};
`;
const ChartName = styled.h1`
  flex: 1;
  margin: 0;
  font-size: 12px;
  font-weight: 400;
  line-height: 18px;
`;
const HeadLink = styled.a`
  margin-right: ${(p) => (p.$last ? 20 : 14)}px;
  color: ${C.link};
  line-height: 18px;
`;
const HeadIcons = styled.span`
  display: flex;
  gap: 1px;
`;
const Axis = styled.svg`
  width: 100%;
  height: 100%;
  border-right: 1px solid ${C.line};
  border-bottom: 1px solid ${C.line};
  ${(p) => p.$active && css`box-shadow: inset 1px 1px ${C.line}, inset -1px -1px ${C.line};`}
  text {
    font: 12px ${LEGEND};
    fill: ${C.grey};
    stroke: ${C.grey};
    stroke-width: 0.3px;
    text-anchor: end;
  }
`;
const Plot = styled.div`
  display: grid;
  grid-template-rows: minmax(0, 1fr);
  min-width: 0;
  min-height: 0;
  border-bottom: 1px solid ${C.line};
  > * { grid-area: 1 / 1; }
`;
const Canvas = styled.svg`
  display: block;
  width: 100%;
  height: 100%;
  min-height: 0;
  isolation: isolate;
  shape-rendering: crispEdges;
  text { font: 12px ${LEGEND}; fill: #e8e8e8; }
`;
const Legend = styled.div`
  z-index: 1;
  display: flex;
  gap: 5px;
  height: 18px;
  padding: 2px 0 0 1px;
  font-family: ${LEGEND};
  font-size: 12px;
  line-height: 16px;
  white-space: nowrap;
`;
const LegendItem = styled.span`
  color: ${(p) => p.$c || C.grey};
  margin-left: ${(p) => p.$gap || 0}px;
`;
const TimeCorner = styled.div`
  border-right: 1px solid ${C.line};
  padding-right: 4px;
  color: ${C.white};
  line-height: 15px;
  text-align: right;
`;
const TimeAxis = styled.svg`
  width: 100%;
  height: 15px;
  text { font: 11px ${UI}; fill: ${C.white}; }
`;

function AxisLabels({ items, active }) {
  return (
    <Axis $active={active}>
      {items.map(([label, at]) => (
        <text key={label} x="57" y={`${at}%`} dy="4">{label}</text>
      ))}
    </Axis>
  );
}
function Grid({ rows }) {
  return rows.map((y) => (
    <line key={y} x1="75" x2="1670" y1={y + 0.5} y2={y + 0.5} stroke={C.grid} strokeDasharray="1 1" />
  ));
}
function Curve({ points, color }) {
  return <polyline points={toPoints(points)} fill="none" stroke={color} />;
}
function Dots({ list, color }) {
  return (
    <g fill="none" stroke={color}>
      {list.map(([x, y], i) => (
        <circle key={i} cx={x} cy={y} r="2.2" shapeRendering="auto" />
      ))}
    </g>
  );
}

const Screened = styled.g`
  > * { mix-blend-mode: screen; }
`;
const FAN = [[266, 86], [322, 86], [378, 84], [433, 87], [568, 86], [690, 83], [924, 87], [1647, 85]];
const CHANNELS = [
  [1075, 83, 1660, 626], [1141, 83, 1671, 575], [1208, 83, 1671, 513],
  [1671, 129, 1166, 552], [1671, 208, 1172, 626], [1671, 285, 1264, 626],
];

function DrawnLines({ color }) {
  return (
    <g stroke={color} strokeWidth="3">
      {[506.5, 513.5, 562.5].map((y) => <line key={y} x1="75" x2="1670" y1={y} y2={y} />)}
      {FAN.map(([x, y]) => (
        <line key={x} x1="213" y1="562" x2={x} y2={y} strokeWidth="2" strokeDasharray="5 5" />
      ))}
      <line x1="213" y1="562" x2="495" y2="84" strokeWidth="2" />
      {CHANNELS.map((l) => <line key={l.join()} x1={l[0]} y1={l[1]} x2={l[2]} y2={l[3]} />)}
    </g>
  );
}
const profileRects = profile.map(([y, x]) => (
  <rect key={y} x={x} y={y} width={1670 - x} height="10" fill="#484800" />
));

function PriceCanvas() {
  return (
    <Canvas viewBox="75 68 1595 560" preserveAspectRatio="none" role="img" aria-label="K线图">
      <defs>
        <clipPath id="range"><rect x="1314" y="93" width="243" height="520" /></clipPath>
        <clipPath id="profile">{profileRects}</clipPath>
      </defs>
      <rect x="1314" y="93" width="243" height="520" fill="#000050" />
      <Grid rows={[109, 218, 327, 437, 546]} />
      <path d={candles.upWick} stroke={C.up} />
      <path d={candles.downWick} stroke={C.down} />
      <path d={candles.upBody} stroke={C.up} strokeWidth="2" />
      <path d={candles.downBody} stroke={C.down} strokeWidth="2" />
      <Curve points={ma233} color="#d22c50" />
      <Curve points={ma144} color="#2c9cd8" />
      <Curve points={ma89} color="#f07800" />
      <Curve points={ma55} color="#7070e8" />
      <Curve points={ma34} color="#00d000" />
      <Curve points={ma21} color="#f000f0" />
      <Curve points={ma13} color="#e0e000" />
      <Curve points={candles.ma} color="#f0f0f0" />
      <Curve points={bollMid} color="#f0f0f0" />
      <Curve points={bollUpper} color="#e0e000" />
      <Curve points={bollLower} color="#f000f0" />
      <Dots list={sarDown.flatMap(alongPath)} color="#00ff00" />
      <Dots list={sarDownDots} color="#00ff00" />
      <Dots list={sarUp.flatMap(alongPath)} color="#ff0000" />
      <Dots list={sarUpDots} color="#ff0000" />
      <Screened>{profileRects}</Screened>
      <path d="M1314.5 93V613M1557.5 93V613" stroke="#ffff50" strokeDasharray="3 2" />
      <DrawnLines color="#c0c0c0" />
      <g clipPath="url(#range)"><DrawnLines color="#c0c090" /></g>
      <g clipPath="url(#profile)">
        <DrawnLines color="#8888c0" />
        <g clipPath="url(#range)"><DrawnLines color="#8888ff" /></g>
      </g>
      <g fill="#000" stroke="#c8c8c8">
        <rect x="75.5" y="490.5" width="34" height="16" />
        <text x="78" y="502" stroke="none">3408</text>
        <rect x="75.5" y="497.5" width="34" height="15" />
        <text x="78" y="509" stroke="none">3389</text>
        <rect x="75.5" y="546.5" width="34" height="15" />
        <text x="78" y="558" stroke="none">3254</text>
      </g>
      <text x="457" y="177">4328</text>
      <path d="M487 172.5h10m-3-2l3 2l-3 2" fill="none" stroke="#e8e8e8" />
      <text x="173" y="568">3253</text>
    </Canvas>
  );
}
function VolumeCanvas() {
  return (
    <Canvas viewBox="75 629 1595 148" preserveAspectRatio="none" role="img" aria-label="成交量">
      <Grid rows={[683, 729]} />
      <path d={volumeBars.up} stroke={C.up} strokeWidth="2" />
      <path d={volumeBars.down} stroke={C.down} strokeWidth="2" />
      <Curve points={mavol1} color="#f0f0f0" />
      <Curve points={mavol2} color="#ffff00" />
    </Canvas>
  );
}
function MacdCanvas() {
  return (
    <Canvas viewBox="75 778 1595 224" preserveAspectRatio="none" role="img" aria-label="MACD">
      <Grid rows={[799, 844, 889, 934]} />
      <path d={macdHist.up} stroke={C.up} />
      <path d={macdHist.down} stroke={C.down} />
      <Curve points={diff} color="#f0f0f0" />
      <Curve points={dea} color="#ffff00" />
    </Canvas>
  );
}

const TIMES = [
  ['202208', 76], ['10', 156], ['12', 277], ['202301', 335], ['03', 462], ['04', 536], ['06', 660], ['08', 792],
  ['09', 865], ['11', 985], ['12', 1055], ['202401', 1109], ['02', 1193], ['04', 1308], ['06', 1436],
];
const PRICE_LEGEND = [
  ['K'], ['MA5:3442', '#fff', 4], ['MA13:3487', C.yellow], ['MA21:3518', '#f0f'], ['MA34:3551', '#0f0'],
  ['MA55:3611', '#8080ff'], ['MA89:3608', '#ff8000'], ['MA144:3702', '#30a4e0'], ['MA233:3723', '#dc3050'],
  ['SAR(10,2,20)', C.grey, 3], ['SARUP:0', '#f00'], ['SARDOWN:3541', '#0f0'],
  ['BOLL(26,2)', C.grey, 3], ['MID:3528', '#fff'], ['UPPER:3644', C.yellow], ['LOWER:3411', '#f0f'],
  ['SSLO', C.grey, 3], ['3395'],
];
function LegendRow({ items }) {
  return (
    <Legend>
      {items.map(([text, color, gap]) => (
        <LegendItem key={text} $c={color} $gap={gap}>{text}</LegendItem>
      ))}
    </Legend>
  );
}

/* ---------- quote panel ---------- */

const QuotePane = styled.aside`
  display: flex;
  flex-direction: column;
  min-height: 0;
  border-left: 1px solid ${C.line};
  background: #000;
  color: ${C.white};
`;
const QuoteHead = styled.div`
  display: flex;
  align-items: flex-start;
  justify-content: space-between;
  flex: none;
  height: 24px;
  padding: 1px 1px 0 34px;
`;
const QuoteTitle = styled.h2`
  margin: 0;
  font-family: "Liberation Serif", "Noto Sans CJK SC", serif;
  font-size: 21px;
  font-weight: 400;
  line-height: 22px;
  color: ${C.yellow};
  white-space: nowrap;
`;
const Balance = styled.div`
  flex: none;
  height: 6px;
  border: solid ${C.line};
  border-width: 1px 0;
  background: linear-gradient(90deg, ${C.red} 57%, ${C.green} 57%);
`;
const Table = styled.table`
  flex: none;
  width: 100%;
  table-layout: fixed;
  border-bottom: ${(p) => (p.$open ? 0 : 1)}px solid ${C.line};
  border-collapse: separate;
  border-spacing: 0;
`;
const Row = styled.tr`
  height: ${(p) => p.$h || 20}px;
`;
const Label = styled.th`
  padding: 0 0 0 ${(p) => p.$pad || 5}px;
  font-size: 14px;
  font-weight: 400;
  line-height: 20px;
  text-align: left;
  white-space: nowrap;
`;
const Num = styled.td`
  padding: 0 ${(p) => p.$end || 0}px 0 ${(p) => (p.$left ? 14 : 0)}px;
  color: ${(p) => p.$c || C.white};
  font-size: ${(p) => (p.$big ? 21 : 14)}px;
  font-weight: ${(p) => (p.$thin ? 400 : 700)};
  line-height: 20px;
  text-align: ${(p) => (p.$left ? 'left' : 'right')};
  white-space: nowrap;
`;
const TradeHead = styled.th`
  padding: 0 ${(p) => p.$end || 0}px 0 0;
  color: #808080;
  font-size: 14px;
  font-weight: 400;
  line-height: 20px;
  text-align: right;
  white-space: nowrap;
`;
const PaneTabs = styled.div`
  display: flex;
  flex: none;
  height: 16px;
  margin-top: auto;
`;
const PaneTab = styled.button`
  width: ${(p) => (p.$active ? 37 : 35)}px;
  border-right: 1px solid ${C.line};
  border-top: 1px solid ${(p) => (p.$active ? 'transparent' : C.line)};
  border-bottom: 1px solid ${(p) => (p.$active ? C.line : 'transparent')};
  color: ${C.white};
  line-height: 14px;
`;
const PaneTabRest = styled.span`
  flex: 1;
  border-top: 1px solid ${C.line};
`;

const ASKS = [['卖五', 3395, 1036], ['卖四', 3394, 725], ['卖三', 3393, 401], ['卖二', 3392, 622], ['卖一', 3391, 403]];
const BIDS = [['买一', 3390, 11], ['买二', 3389, 260], ['买三', 3388, 1794], ['买四', 3387, 713], ['买五', 3386, 1452]];
const STATS = [
  ['最新', '3391', C.green, '结算', '3398', C.green],
  ['涨跌', '-37', C.green, '昨结', '3428', C.white],
  ['幅度', '-1.08%', C.green, '开盘', '3405', C.green],
  ['总手', '1376818', C.yellow, '最高', '3413', C.green],
  ['现手', '6', C.yellow, '最低', '3384', C.green],
  ['涨停', '3599', C.red, '跌停', '3256', C.green],
  ['持仓', '2382127', C.yellow, '仓差', '52747', C.yellow],
  ['外盘', '669988', C.red, '内盘', '706830', C.green],
];
const g = C.green;
const r = C.red;
const TRADES = [
  ['14:42', 3396, 578, g, '+510', '空开', g], ['14:44', 3395, 502, r, '-275', '空平', r],
  ['14:45', 3393, 515, g, '-129', '多平', g], [':24', 3394, 502, g, '+398', '空开', g],
  ['14:46', 3395, 615, g, '+427', '空开', g], [':16', 3396, 685, g, '+30', '空开', g],
  ['14:47', 3394, 575, g, '-287', '多平', g], ['14:48', 3393, 510, g, '+163', '空开', g],
  [':11', 3393, 502, r, '-324', '空平', r], [':43', 3394, 537, r, '-74', '空平', r],
  ['14:50', 3392, 675, g, '-281', '多平', g], ['14:51', 3393, 513, r, '+81', '多开', r],
  ['14:53', 3392, 612, r, '-165', '空平', r], [':25', 3391, 503, g, '+102', '空开', g],
  [':27', 3391, 922, r, '-633', '空平', r], [':44', 3390, 1199, g, '+632', '空开', g],
  [':52', 3388, 999, g, '-306', '多平', g], ['14:55', 3389, 550, r, '-109', '空平', r],
  ['14:56', 3389, 649, g, '+436', '空开', g], ['14:57', 3388, 521, r, '-401', '空平', r],
  ['14:58', 3389, 552, r, '+200', '多开', r], [':07', 3388, 515, g, '-63', '多平', g],
  ['14:59', 3390, 518, r, '+233', '多开', r],
];

function Book({ rows }) {
  return (
    <Table>
      <colgroup><col width="37" /><col width="76" /><col /></colgroup>
      <tbody>
        {rows.map(([name, price, size]) => {
          const big = name.endsWith('一');
          return (
            <Row key={name} $h={big ? 30 : 20}>
              <Label scope="row">{name}</Label>
              <Num $c={C.green} $big={big}>{price}</Num>
              <Num $c={C.yellow} $big={big} $left>{size}</Num>
            </Row>
          );
        })}
      </tbody>
    </Table>
  );
}

function Quotes() {
  return (
    <QuotePane>
      <QuoteHead>
        <QuoteTitle>螺纹2410(rb2410)</QuoteTitle>
        <button type="button" aria-label="还原">
          <svg width="16" height="15" fill="none" stroke={C.link}>
            <rect x=".5" y=".5" width="15" height="13" />
            <path d="M6.500 5.500V3.500H13.500V8.500H11.500M3.500 6.500H10.500V11.500H3.500ZM3 7.500H11M6 4.500H14" />
          </svg>
        </button>
      </QuoteHead>
      <Balance />
      <Book rows={ASKS} />
      <Book rows={BIDS} />
      <Table>
        <colgroup><col width="37" /><col width="76" /><col width="48" /><col /></colgroup>
        <tbody>
          {STATS.map(([a, av, ac, b, bv, bc]) => (
            <Row key={a}>
              <Label scope="row">{a}</Label>
              <Num $c={ac}>{av}</Num>
              <Label scope="row" $pad={14}>{b}</Label>
              <Num $c={bc} $end={6}>{bv}</Num>
            </Row>
          ))}
        </tbody>
      </Table>
      <Table $open>
        <colgroup><col width="40" /><col width="68" /><col width="47" /><col width="48" /><col /></colgroup>
        <thead>
          <Row $h={22}>
            <TradeHead $end={7}>北京</TradeHead>
            <TradeHead>价格</TradeHead>
            <TradeHead>√大单</TradeHead>
            <TradeHead>仓差</TradeHead>
            <TradeHead $end={1}>性质</TradeHead>
          </Row>
        </thead>
        <tbody>
          {TRADES.map(([time, price, size, sc, delta, kind, kc], i) => (
            <Row key={i} $h={22}>
              <Num $thin={time[0] === ':'} $end={time[0] === ':' ? 2 : 0}>{time}</Num>
              <Num $c={C.green}>{price}</Num>
              <Num $c={sc}>{size}</Num>
              <Num $c={C.yellow}>{delta}</Num>
              <Num $c={kc} $thin $end={1}>{kind}</Num>
            </Row>
          ))}
        </tbody>
      </Table>
      <PaneTabs>
        <PaneTab $active type="button">笔</PaneTab>
        <PaneTab type="button">权</PaneTab>
        <PaneTabRest />
      </PaneTabs>
    </QuotePane>
  );
}

/* ---------- statistics dialog ---------- */

const Dialog = styled.form`
  position: absolute;
  z-index: 2;
  left: 880px;
  top: 502px;
  width: 308px;
  background: #f0f0f0;
  color: #000;
  box-shadow: 0 0 0 1px #444, 2px 3px 10px rgba(0, 0, 0, 0.6);
`;
const DialogHead = styled.div`
  display: flex;
  align-items: center;
  justify-content: space-between;
  height: 25px;
  padding: 0 10px 0 3px;
  background: #fff;
  color: #999;
`;
const DialogTitle = styled.h2`
  margin: 0;
  font-size: 12px;
  font-weight: 400;
  line-height: 24px;
`;
const DialogBody = styled.div`
  display: grid;
  grid-template-columns: 78px 120px 1fr;
  grid-auto-rows: 20px;
  column-gap: 14px;
  row-gap: 4px;
  padding: 12px 16px 12px 0;
`;
const FieldLabel = styled.label`
  grid-column: 1;
  line-height: 20px;
  text-align: right;
`;
const Field = styled.span`
  grid-column: 2;
  display: flex;
  border: 1px solid #7f9db9;
  background: #fff;
`;
const FieldInput = styled.input`
  flex: 1;
  min-width: 0;
  padding: 0 0 1px 2px;
  border: 0;
  outline: 0;
  background: none;
  color: #000;
  font-size: 11px;
  line-height: 16px;
`;
const Spinner = styled.button`
  display: flex;
  align-items: center;
  justify-content: center;
  width: 17px;
  border-left: 1px solid #7f9db9;
  background: #bcd0fa;
`;
const Note = styled.span`
  grid-column: 3;
  line-height: 20px;
  text-align: center;
`;
const CloseButton = styled.button`
  grid-column: 3;
  grid-row: 12;
  justify-self: end;
  width: 65px;
  height: 20px;
  border: 1px solid #003c74;
  border-radius: 3px;
  background: linear-gradient(#fff, #ecebe5 85%, #d8d0c4);
  line-height: 18px;
`;
const FIELDS = [
  ['起始时间', '2024-04-01', true], ['结束时间', '2024-07-24', true], ['期初价', '3439'], ['最高价', '3820'],
  ['最低价', '3384'], ['期末价', '3391'], ['成交量', '112393927', false, '分析周期'], ['仓差', '812540', false, '共77个'],
  ['加权均价', '3619'], ['区间涨幅', '-1.57%'], ['区间振幅', '12.66%'],
];

function RangeDialog() {
  return (
    <Dialog onSubmit={(e) => e.preventDefault()}>
      <DialogHead>
        <DialogTitle>螺纹2410 区间统计</DialogTitle>
        <button type="button" aria-label="关闭窗口">
          <svg width="11" height="11" stroke="#888" fill="none"><path d="M.5 .5L10.500 10.500M10.500 .5L.5 10.500" /></svg>
        </button>
      </DialogHead>
      <DialogBody>
        {FIELDS.map(([name, value, spin, note], i) => (
          <React.Fragment key={name}>
            <FieldLabel htmlFor={`stat-${i}`}>{name}</FieldLabel>
            <Field>
              <FieldInput id={`stat-${i}`} defaultValue={value} />
              {spin && (
                <Spinner type="button" aria-label={`调整${name}`}>
                  <svg width="8" height="14" fill="#48588c"><path d="M4 1L8 5H0ZM4 13L8 9H0Z" /></svg>
                </Spinner>
              )}
            </Field>
            {note && <Note>{note}</Note>}
          </React.Fragment>
        ))}
        <CloseButton type="submit">关闭</CloseButton>
      </DialogBody>
    </Dialog>
  );
}

/* ---------- toolbar icons ---------- */

const ICONS = {
  后退: <path d="M-3 8L5 1V5H15V11H5V15Z" fill="#ffc828" stroke="#b88000" />,
  首页: (
    <>
      <path d="M3 8V15H13V8L8 3Z" fill="#f4f4f4" stroke="#888" />
      <path d="M0 9L8 1L16 9L14 10L8 4L2 10Z" fill="#e01818" stroke="#900" />
      <rect x="6" y="10" width="4" height="5" fill="#804020" />
    </>
  ),
  便笺: (
    <>
      <path d="M1 1H15V11L11 15H1Z" fill="#e8a828" />
      <path d="M3 5H13M3 8H13M3 11H12" stroke="#b07818" />
    </>
  ),
  F10: (
    <>
      <path d="M0 4L11 1L15 3V15H1Z" fill="#ff7820" />
      <text x="1" y="12" fontSize="8" fontWeight="700" fill="#fff">F10</text>
    </>
  ),
  刷新: <path d="M2 7C3 2 11 1 13 5M13 2V6H9M14 9C13 14 5 15 3 11M3 14V10H7" fill="none" stroke="#3a9c30" strokeWidth="2.400" />,
  放大: (
    <>
      <path d="M1 15L6 10" stroke="#f09018" strokeWidth="3" />
      <circle cx="10" cy="6" r="4.500" fill="#fff" stroke="#e02828" strokeWidth="2" />
      <path d="M8 6H12M10 4V8" stroke="#e02828" />
    </>
  ),
  缩小: (
    <>
      <path d="M1 15L6 10" stroke="#f09018" strokeWidth="3" />
      <circle cx="10" cy="6" r="4.500" fill="#fff" stroke="#e02828" strokeWidth="2" />
      <path d="M8 6H12" stroke="#e02828" />
    </>
  ),
  叠加: (
    <>
      <rect x="0" y="1" width="10" height="9" rx="1" fill="#d02020" />
      <rect x="5" y="5" width="11" height="10" rx="1" fill="#60a860" stroke="#cde8cd" />
    </>
  ),
  画线: (
    <>
      <path d="M1 15H14" stroke="#c02020" strokeWidth="2" />
      <path d="M3 10L11 1L15 4L7 12L2 13Z" fill="#f05020" stroke="#a03010" />
    </>
  ),
  预警: (
    <>
      <path d="M4 1C9 1 8 8 15 11C13 16 5 16 1 13C5 9 1 4 4 1Z" fill="#e8a020" stroke="#804010" />
      <ellipse cx="8" cy="13" rx="5" ry="2" fill="#803010" />
    </>
  ),
  筛选: (
    <>
      <path d="M1 1H15L10 8V15H6V8Z" fill="#b8b8b8" stroke="#666" />
      <path d="M3 3H13L8 9Z" fill="#e02828" />
    </>
  ),
  新: (
    <>
      <text x="0" y="13" fontSize="12" fill="#4090e0">新</text>
      <circle cx="13" cy="3" r="3" fill="#f00" />
    </>
  ),
};
const ICONS2 = {
  报表: (
    <>
      <rect x=".5" y="1.500" width="15" height="13" fill="#fff" stroke="#222" />
      <rect x="1" y="2" width="14" height="3" fill="#e8c050" />
      <path d="M2 7.500H7M9 7.500H14" stroke="#208020" />
      <path d="M2 10H7M9 10H14M2 12.500H7M9 12.500H14" stroke="#303080" />
    </>
  ),
  走势: (
    <>
      <path d="M2 15V10M6 15V8" stroke="#f0a020" strokeWidth="3" />
      <path d="M10 15V9M14 15V7" stroke="#e03020" strokeWidth="3" />
      <path d="M1 9L6 4L9 7L14 1" fill="none" stroke="#e01010" strokeWidth="2" />
    </>
  ),
};
const GOLD = 'linear-gradient(#e0b040, #c89000)';
const GREEN = 'linear-gradient(#90c878, #58a048)';
const ORANGE = 'linear-gradient(#ff9050, #f04818)';
const PERIODS = [
  ['Tick', ORANGE], ['日', GOLD], ['周', GOLD], ['月', GOLD], ['季', GOLD], ['X', GOLD], ['1', GREEN], ['3', GREEN],
  ['5', GREEN], ['15', GREEN], ['30', GREEN], ['60', GREEN], ['2hr', GREEN], ['4hr', GREEN], ['Y', GREEN],
];
const iconButtons = (set, first) =>
  Object.entries(set).map(([name, art], i) => (
    <ToolButton key={name} type="button" aria-label={name} $first={first && i === 0}>
      <svg width="16" height="16">{art}</svg>
    </ToolButton>
  ));

const MENU = ['系统', '页面', '分析', '新闻', '特色功能', '一德期货专栏', '交易', '工具', '帮助'];
const SIDE = ['技术分析', '国内期货', '股指期货', '期权报价', '期权策略', '热点排名', '新闻资讯'];

export default function App() {
  return (
    <>
      <Global />
      <Desk>
        <MenuBar>
          <MenuList>
            {MENU.map((m) => <MenuItem key={m} type="button" $hot={m === '特色功能'}>{m}</MenuItem>)}
          </MenuList>
          <AppTitle>博易大师-一德期货</AppTitle>
          <WindowTools>
            <PillButton type="button">
              <svg width="10" height="14"><path d="M7 0L1 8H5L2 14L10 5H6Z" fill="#f89018" /></svg>
              交易
            </PillButton>
            <PillButton type="button">
              <svg width="16" height="14"><path d="M8 1C15 1 17 9 9 10L6 13V10C-2 9 1 1 8 1Z" fill="#909090" /></svg>
              论坛
            </PillButton>
            <FrameButtons>
              <FrameButton type="button" aria-label="最小化"><svg width="12" height="12"><path d="M1 7H11V10H1Z" fill="#fff" stroke="#999" /></svg></FrameButton>
              <FrameButton type="button" aria-label="最大化"><svg width="12" height="12"><path d="M1 1H11V11H1ZM4 4H8V8H4Z" fill="#fff" stroke="#999" /></svg></FrameButton>
              <FrameButton type="button" aria-label="退出"><svg width="12" height="12"><path d="M1 1L11 11M11 1L1 11" stroke="#999" strokeWidth="3" /></svg></FrameButton>
            </FrameButtons>
          </WindowTools>
          <Brand>5E天资5etz.com</Brand>
        </MenuBar>
        <ToolBar>
          {iconButtons(ICONS, true)}
          <ToolDivider />
          {iconButtons(ICONS2)}
          {PERIODS.map(([name, fill]) => (
            <ToolButton key={name} type="button" $active={name === '日'}>
              <Badge $fill={fill} $small={name.length > 2}>{name}</Badge>
            </ToolButton>
          ))}
          <ToolDivider />
          <ToolButton type="button"><Badge $fill={ORANGE}>画</Badge></ToolButton>
        </ToolBar>
        <Workspace>
          <SideTabs>
            {SIDE.map((name, i) => (
              <SideTab key={name} type="button" $active={i === 0}>
                {[...name].map((ch, k) => <SideChar key={k}>{ch}</SideChar>)}
                {i === 0 && <svg width="8" height="12"><path d="M1 3L5 7L1 11Z" fill="#fff" /></svg>}
              </SideTab>
            ))}
          </SideTabs>
          <ChartPane>
            <ChartHead>
              <ChartName>螺纹2410(010610)&lt;日线&gt;</ChartName>
              <HeadLink href="#overlay">商品叠加</HeadLink>
              <HeadLink href="#options" $last>查看期权</HeadLink>
              <HeadLink href="#period" $last>周期</HeadLink>
              <HeadIcons>
                <svg width="16" height="14" fill="none" stroke={C.link}><rect x=".5" y=".5" width="15" height="13" /><path d="M2.500 7L6.500 3.500V5.500H13.500V8.500H6.500V10.500Z" /></svg>
                <svg width="16" height="14" fill="none" stroke={C.link}><rect x=".5" y=".5" width="15" height="13" /><path d="M13.500 7L9.500 3.500V5.500H2.500V8.500H9.500V10.500Z" /></svg>
                <svg width="16" height="14" fill="none" stroke={C.link}><rect x=".5" y=".5" width="15" height="13" /><path d="M9.500 1V13M1 8.500H9M11 3.500H14M11 5.500H14M11 7.500H14M11 9.500H14" /></svg>
              </HeadIcons>
            </ChartHead>

            <AxisLabels items={[['4500', 7.4], ['4200', 26.9], ['3900', 46.3], ['3600', 65.9], ['3300', 85.4]]} />
            <Plot>
              <PriceCanvas />
              <LegendRow items={PRICE_LEGEND} />
            </Plot>

            <AxisLabels items={[['200万', 36.6], ['100万', 67.6]]} />
            <Plot>
              <VolumeCanvas />
              <LegendRow items={[['VOL(5,13)'], ['VOLUME:1376818.0000'], ['MAVOL1:1479704.0000', '#fff'], ['MAVOL2:1404436.9231', C.yellow]]} />
            </Plot>

            <AxisLabels active items={[['200', 9.6], ['100', 29.6], ['0', 49.7], ['-100', 69.8]]} />
            <Plot>
              <MacdCanvas />
              <LegendRow items={[['MACD(5,21,13)'], ['DIFF:-75.6291', '#fff'], ['DEA:-47.6168', C.yellow], ['MACD:-56.0245']]} />
            </Plot>

            <TimeCorner>日线</TimeCorner>
            <TimeAxis>
              {TIMES.map(([label, x]) => (
                <text key={x} x={`${((x - 75) / 15.95).toFixed(2)}%`} y="11">{label}</text>
              ))}
            </TimeAxis>
            <RangeDialog />
          </ChartPane>
          <Quotes />
        </Workspace>
      </Desk>
    </>
  );
}
